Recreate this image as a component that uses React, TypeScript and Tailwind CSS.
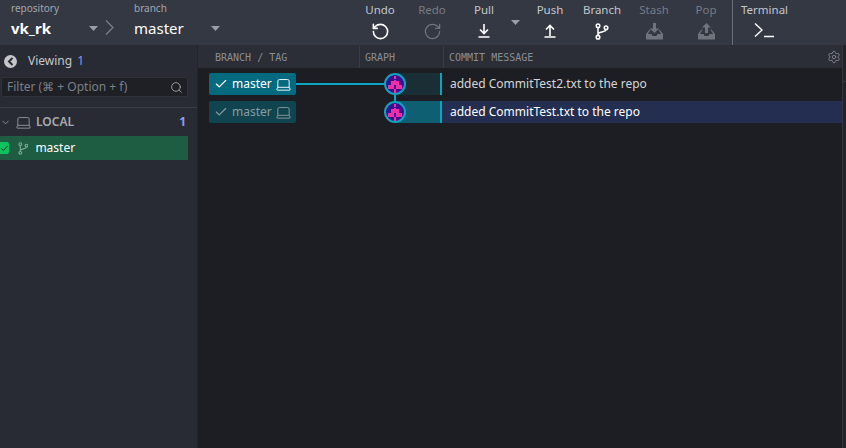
import React from 'react';
import { Laptop, Check, ChevronDown, Search, Settings, RotateCcw, RotateCw } from 'lucide-react';

const ToolButton = ({ label, dim, icon }: { label: string; dim?: boolean; icon: React.ReactNode }) => (
    <div className={`flex flex-col items-center w-[40px] ${dim ? 'text-[#777b84]' : 'text-[#c4c6cb]'}`}>
        <span className="text-[11.5px] leading-[18px] mt-[1px]">{label}</span>
        <div className={`mt-[2px] h-[20px] flex items-center justify-center ${dim ? 'text-[#6f737c]' : 'text-white'}`}>{icon}</div>
    </div>
);

const Caret = ({ className }: { className: string }) => (
    <svg width="9" height="5" viewBox="0 0 9 5" className={className}><path d="M0 0h9L4.5 5z" fill="#9a9da5" /></svg>
);

const BranchIcon = ({ size, className }: { size: number; className?: string }) => (
    <svg width={size * 0.8} height={size} viewBox="0 0 14 18" fill="none" stroke="currentColor" strokeWidth="1.6" className={className}>
        <circle cx="3" cy="3" r="1.9" />
        <circle cx="3" cy="15" r="1.9" />
        <circle cx="11.500" cy="5" r="1.900" />
        <path d="M3 5v8M3 12c0-3 8-2 8.500-5" />
    </svg>
);

const TrayIcon = ({ up }: { up?: boolean }) => (
    <svg width="19" height="17" viewBox="0 0 19 17" fill="currentColor">
        <path d={up ? 'M9.500 0 14 4.500h-3V10H8V4.500H5z' : 'M8 0h3v5.500h3L9.500 10 5 5.500h3z'} />
        <path d="M4.500 6.500 1 11v5.500h17V11l-3.500-4.500h-1.200L16.200 11H12.500l-1 2h-4l-1-2H2.800l2.900-4.500z" fillRule="evenodd" />
    </svg>
);

const Avatar = () => (
    <svg width="24" height="24" viewBox="0 0 24 24" className="shrink-0">
        <circle cx="12" cy="12" r="10" fill="#3c0f91" stroke="#0fa3bf" strokeWidth="2" />
        <g fill="#f02fa6" shapeRendering="crispEdges">
            <rect x="11" y="4" width="2" height="3" />
            <rect x="8" y="9" width="3" height="4" />
            <rect x="13" y="9" width="3" height="4" />
            <rect x="5" y="13" width="6" height="4" />
            <rect x="13" y="13" width="6" height="4" />
            <rect x="11" y="8" width="2" height="5" />
            <rect x="11" y="17" width="2" height="4" />
        </g>
    </svg>
);

const BranchTag = ({ active }: { active?: boolean }) => (
    <div className={`w-[87px] h-[22px] rounded-[2px] flex items-center pl-[5px] text-[12px] ${active ? 'bg-[#046a80] text-white' : 'bg-[#10454f] text-[#8a9ba0]'}`}>
        <Check size={14} strokeWidth={2} className="shrink-0" />
        <span className="ml-[4px] w-[39px]">master</span>
        <Laptop size={17} strokeWidth={1.3} className="ml-[4px] shrink-0" />
    </div>
);

const CommitRow = ({ text, selected }: { text: string; selected?: boolean }) => (
    <div className="flex h-[22px] relative pl-[11px]">
        <BranchTag active={!selected} />
        {/* edge from tag to avatar, and down to the next commit */}
        {!selected && <div className="absolute left-[98px] top-[10px] w-[90px] h-[2px] bg-[#0ba5c2]" />}
        {!selected && <div className="absolute left-[196px] top-[11px] w-[2px] h-[28px] bg-[#0ba5c2]" />}
        <div className="absolute left-[185px] -top-[1px] z-10"><Avatar /></div>
        <div className="w-[99px] shrink-0" />
        <div className={`w-[47px] h-full shrink-0 border-r-[2px] border-[#0ba5c2] ${selected ? 'bg-[#0f5f72]' : 'bg-[#1a2e35]'}`} />
        <div className={`flex-1 pl-[8px] text-[12px] leading-[22px] ${selected ? 'bg-[#232e50] text-white' : 'text-[#d5d6d9]'}`}>{text}</div>
    </div>
);

export default function App() {
    return (
        <div className="font-['Noto_Sans',sans-serif] w-[846px] h-[448px] overflow-hidden bg-[#1c1e23] flex flex-col">
            {/* toolbar */}
            <div className="h-[45px] bg-[#343843] flex shrink-0">
                <div className="w-[134px] pl-[11px] shrink-0 relative">
                    <div className="text-[10px] leading-[16px] text-[#a3a5ac]">repository</div>
                    <div className="text-[15px] leading-[20px] mt-[2px] font-bold text-white">vk_rk</div>
                    <Caret className="absolute left-[89px] top-[26px]" />
                    <svg width="9" height="15" viewBox="0 0 9 15" fill="none" stroke="#7d8089" strokeWidth="1.2" className="absolute left-[105px] top-[20px]"><path d="M1 .5 8 7.500 1 14.500" /></svg>
                </div>
                <div className="w-[226px] shrink-0 relative">
                    <div className="text-[10px] leading-[16px] text-[#a3a5ac]">branch</div>
                    <div className="text-[15px] leading-[20px] mt-[2px] text-white">master</div>
                    <Caret className="absolute left-[77px] top-[26px]" />
                </div>
                <div className="flex">
                    <ToolButton label="Undo" icon={<RotateCcw size={19} strokeWidth={2} />} />
                    <div className="w-[12px]" />
                    <ToolButton dim label="Redo" icon={<RotateCw size={19} strokeWidth={1.6} />} />
                    <div className="w-[12px]" />
                    <ToolButton label="Pull" icon={<svg width="14" height="14" viewBox="0 0 14 14" fill="none" stroke="currentColor" strokeWidth="1.6"><path d="M7 0v9M3 5.500 7 9.500 11 5.500M1.500 13h11" /></svg>} />
                    <Caret className="ml-[7px] mt-[20px]" />
                    <div className="w-[10px]" />
                    <ToolButton label="Push" icon={<svg width="14" height="14" viewBox="0 0 14 14" fill="none" stroke="currentColor" strokeWidth="1.6"><path d="M7 12V2M3 5.500 7 1.500 11 5.500M1.500 13h11" /></svg>} />
                    <div className="w-[12px]" />
                    <ToolButton label="Branch" icon={<BranchIcon size={17} />} />
                    <div className="w-[12px]" />
                    <ToolButton dim label="Stash" icon={<TrayIcon />} />
                    <div className="w-[12px]" />
                    <ToolButton dim label="Pop" icon={<TrayIcon up />} />
                </div>
                <div className="ml-[6px] h-[45px] border-l border-[#6a6e78] pl-[8px] text-[#c4c6cb]">
                    <div className="text-[11.5px] leading-[18px] mt-[1px]">Terminal</div>
                    <svg width="22" height="16" viewBox="0 0 22 16" fill="none" stroke="#fff" strokeWidth="1.4" className="ml-[13px] mt-[3px]"><path d="M1 1.500 8 8 1 14.500M10 14.500h10" /></svg>
                </div>
            </div>
            <div className="flex-1 flex min-h-0">
                {/* sidebar */}
                <div className="w-[198px] shrink-0 bg-[#282b33] border-r border-[#23252b]">
                    <div className="h-[32px] flex items-center pl-[4px] text-[12px] text-[#c4c6cb]">
                        <span className="w-[13px] h-[13px] rounded-full bg-[#c4c6cb] flex items-center justify-center">
                            <svg width="7" height="9" viewBox="0 0 7 9" fill="none" stroke="#282b33" strokeWidth="2"><path d="M5.500 1 2 4.500 5.500 8" /></svg>
                        </span>
                        <span className="ml-[11px]">Viewing</span>
                        <span className="ml-[5px] text-[#8f9ce8]">1</span>
                    </div>
                    <div className="ml-[1px] w-[187px] h-[20px] bg-[#1e2025] rounded-[2px] border border-[#2f323a] flex items-center pl-[5px] pr-[4px] text-[12px] text-[#7c7f87]">
                        <span className="flex-1">Filter (⌘ + Option + f)</span>
                        <Search size={13} strokeWidth={1.5} className="text-[#b0b2b8]" />
                    </div>
                    <div className="mt-[10px] border-t border-[#3a3d45] h-[29px] flex items-center text-[12px] font-semibold text-[#a8aab0] pr-[11px]">
                        <ChevronDown size={11} strokeWidth={1.8} className="text-[#9a9da5]" />
                        <Laptop size={17} strokeWidth={1.2} className="ml-[4px] text-[#9a9da5]" />
                        <span className="ml-[4px] flex-1">LOCAL</span>
                        <span className="text-[#8f9ce8] font-bold">1</span>
                    </div>
                    <div className="w-[188px] h-[24px] bg-[#1e5d42] flex items-center text-[12px] text-white">
                        <span className="w-[9px] h-[12px] bg-[#12c060] rounded-r-[2px] flex items-center justify-center">
                            <Check size={9} strokeWidth={2.5} className="text-[#1c2b25]" />
                        </span>
                        <BranchIcon size={13} className="ml-[9px] text-[#7fa792]" />
                        <span className="ml-[7px]">master</span>
                    </div>
                </div>
                {/* commit graph */}
                <div className="flex-1 min-w-0">
                    <div className="h-[23px] bg-[#2b2e36] flex items-center pt-[1px] font-['DejaVu_Sans_Mono',monospace] text-[10px] text-[#8a8d94]">
                        <div className="w-[162px] h-full flex items-center pl-[17px] border-r border-[#3a3d45]">BRANCH / TAG</div>
                        <div className="w-[84px] h-full flex items-center pl-[5px] border-r border-[#3a3d45]">GRAPH</div>
                        <div className="flex-1 pl-[5px]">COMMIT MESSAGE</div>
                        <Settings size={14} strokeWidth={1.5} className="mr-[1px] text-[#85888f]" />
                    </div>
                    <div className="mt-[5px] flex flex-col gap-[6px]">
                        <CommitRow text="added CommitTest2.txt to the repo" />
                        <CommitRow text="added CommitTest.txt to the repo" selected />
                    </div>
                </div>
                {/* scrollbar strip */}
                <div className="w-[4px] shrink-0 bg-[#22242a] border-l border-[#33363e] relative">
                    <div className="absolute left-0 right-0 top-[36px] h-[1px] bg-[#3a3d45]" />
                </div>
            </div>
        </div>
    );
}
